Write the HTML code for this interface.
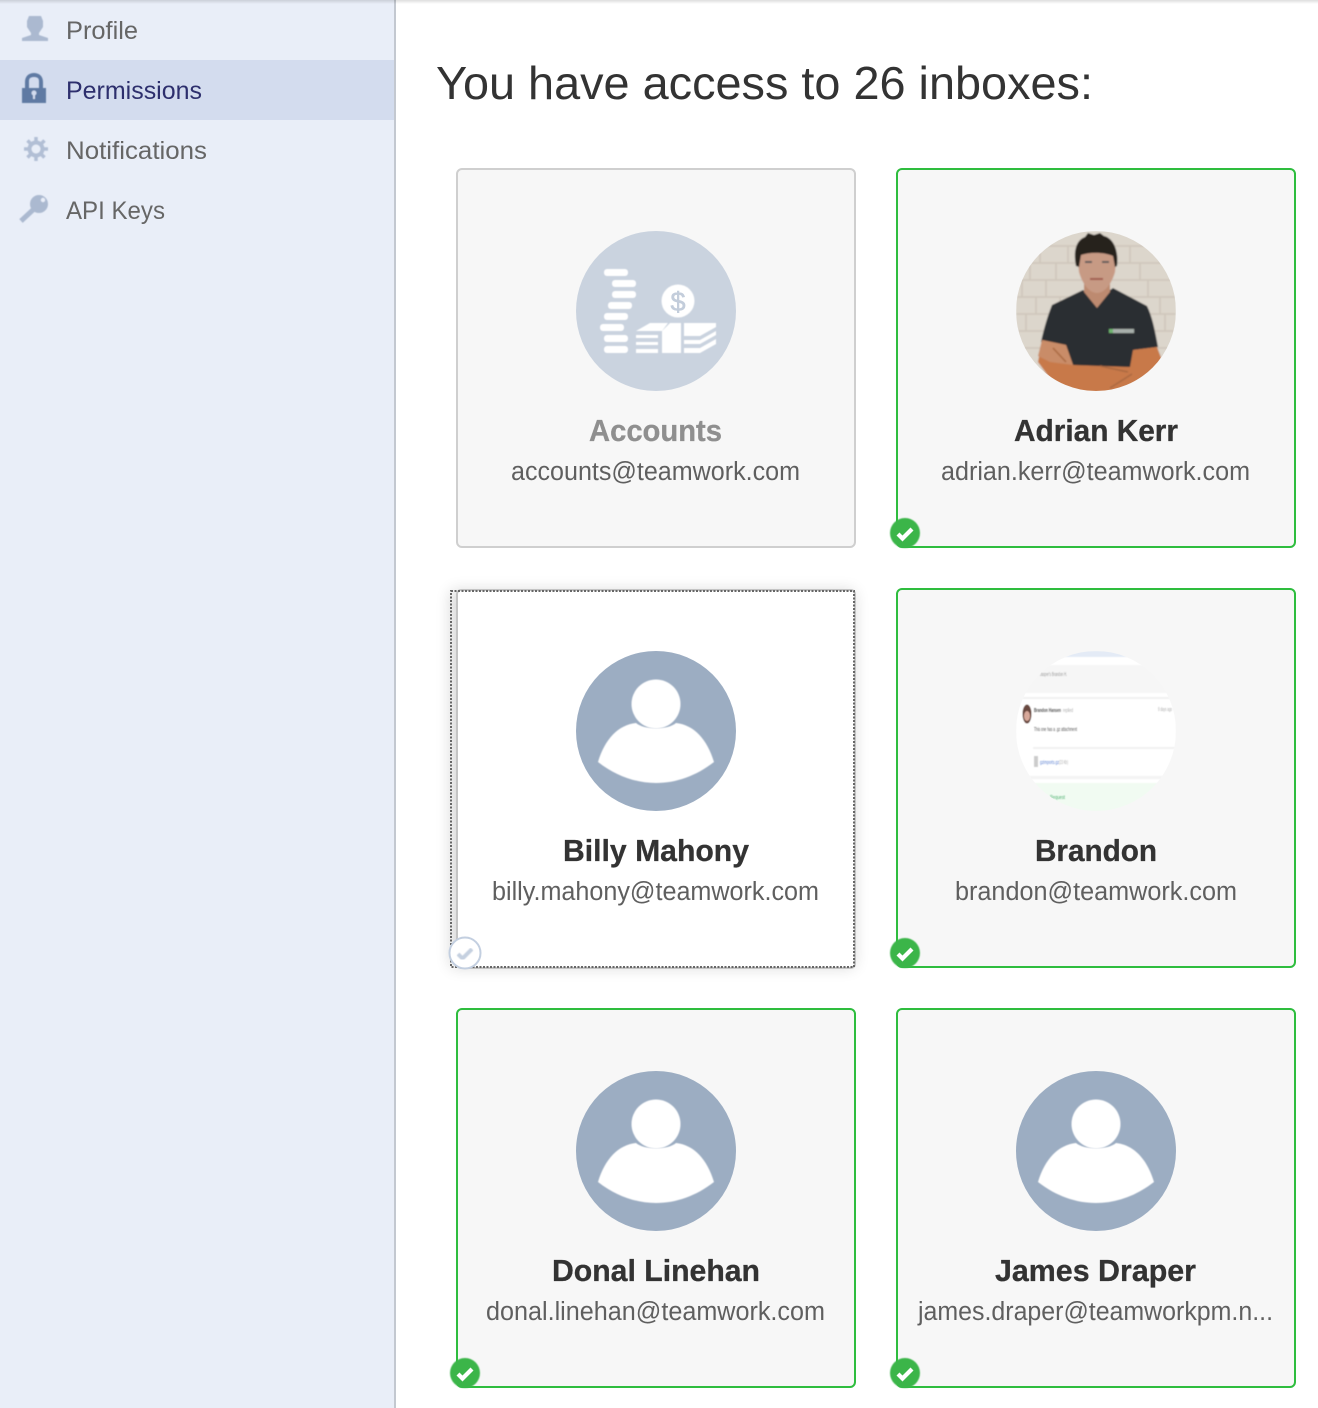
<!DOCTYPE html>
<html lang="en"><head><meta charset="utf-8"><title>Permissions</title>
<style>
html,body{margin:0;padding:0;background:#fff;width:1318px;height:1408px;overflow:hidden}
svg{display:block}
text{font-family:"Liberation Sans",sans-serif}
.nav{font-size:25px;fill:#666}
.nm{font-size:31px;font-weight:700;fill:#333;stroke:#333;stroke-width:.3}
.em{font-size:25.5px;fill:#5f5f5f}
</style></head><body>
<svg xmlns="http://www.w3.org/2000/svg" width="1318" height="1408" viewBox="0 0 1318 1408">
<defs>
<linearGradient id="top" x1="0" y1="0" x2="0" y2="1"><stop offset="0" stop-color="#000" stop-opacity=".13"/><stop offset="1" stop-color="#000" stop-opacity="0"/></linearGradient>
<filter id="b1" x="-10%" y="-10%" width="120%" height="120%"><feGaussianBlur stdDeviation=".9"/></filter>
<filter id="b3" x="-10%" y="-10%" width="120%" height="120%"><feGaussianBlur stdDeviation=".4"/></filter>
<filter id="sh" x="-15%" y="-15%" width="130%" height="130%"><feGaussianBlur stdDeviation="8"/></filter>
<clipPath id="c1"><circle cx="1096" cy="311" r="80"/></clipPath>
<clipPath id="c2"><circle cx="1096" cy="731" r="80"/></clipPath>
<g id="person">
<circle r="80" fill="#9cadc2"/>
<path d="M-58,31C-51,8-38-6-20-8C-12-1 12-1 20-8C38-6 51,8 58,31C40,45 20,52 0,52C-20,52-40,45-58,31Z" fill="#fff" filter="url(#b3)"/>
<circle cx="0" cy="-27" r="24.5" fill="#fff" filter="url(#b3)"/>
</g>
<g id="ok"><circle r="15" fill="#3bb54a" filter="url(#b3)"/><path d="M-7,1L-2.5,5.5L7,-4" fill="none" stroke="#fff" stroke-width="4.2"/></g>
</defs>

<!-- sidebar -->
<rect x="0" y="0" width="394" height="1408" fill="#e9eef8"/>
<rect x="394" y="0" width="2" height="1408" fill="#c3c8d0"/>
<rect x="0" y="60" width="394" height="60" fill="#d3dcee"/>
<rect x="0" y="0" width="1318" height="4" fill="url(#top)"/>

<g filter="url(#b3)">
<path d="M29,16H41L43,21V27L39,33V35L48,38V41H22V38L31,35V33L27,27V21Z" fill="#abb9d0"/>
<path d="M22,88H25V82C25,76 29,73 34,73C39,73 43,76 43,82V88H46V103H22ZM29,88H39V81C39,78 37,77 34,77C31,77 29,78 29,81Z" fill="#5f7aa3" fill-rule="evenodd"/>
<circle cx="34" cy="93" r="2.500" fill="#d3dcee"/><rect x="33" y="93" width="2" height="6" fill="#d3dcee"/>
<path d="M36,137V161M24,149H48M27.5,140.5L44.500,157.500M44.500,140.500L27.500,157.500" stroke="#b2bfd5" stroke-width="3.500"/>
<circle cx="36" cy="149" r="8.500" fill="#b2bfd5"/>
<circle cx="36" cy="149" r="4.500" fill="#e9eef8"/>
<circle cx="39" cy="204" r="9" fill="#abb9d0"/>
<path d="M35,208L21,221" stroke="#abb9d0" stroke-width="5"/>
<circle cx="43" cy="200" r="2.200" fill="#e9eef8"/>
</g>

<text class="nav" x="66" y="39" textLength="72" lengthAdjust="spacingAndGlyphs">Profile</text>
<text class="nav" x="66" y="99" textLength="136" lengthAdjust="spacingAndGlyphs" style="fill:#2d2f6d">Permissions</text>
<text class="nav" x="66" y="159" textLength="141" lengthAdjust="spacingAndGlyphs">Notifications</text>
<text class="nav" x="66" y="219" textLength="99" lengthAdjust="spacingAndGlyphs">API Keys</text>

<text x="436" y="99" font-size="46" fill="#333" textLength="657" lengthAdjust="spacingAndGlyphs">You have access to 26 inboxes:</text>

<!-- card 1 -->
<rect x="457" y="169" width="398" height="378" rx="5" fill="#f7f7f7" stroke="#cfcfcf" stroke-width="2"/>
<circle cx="656" cy="311" r="80" fill="#cad3df"/>
<g fill="#fff" filter="url(#b3)">
<rect x="604" y="269" width="24" height="7" rx="3"/><rect x="612" y="280" width="24" height="7" rx="3"/>
<rect x="612" y="291" width="24" height="7" rx="3"/><rect x="608" y="302" width="24" height="7" rx="3"/>
<rect x="604" y="313" width="24" height="7" rx="3"/><rect x="600" y="324" width="24" height="7" rx="3"/>
<rect x="604" y="335" width="24" height="7" rx="3"/><rect x="604" y="346" width="24" height="7" rx="3"/>
<circle cx="678" cy="301" r="16.500"/>
<path d="M636,331L650,323H668L662,331ZM636,335H658V338H636ZM636,342H658V345H636ZM636,349H658V353H636Z"/>
<path d="M662,331L670,323H681V353H662Z"/>
<path d="M684,323H716V327L700,336H684ZM684,340H700L716,331V335L700,344H684ZM684,348H700L716,339V344L700,353H684Z"/>
</g>
<text x="678" y="311" font-size="27" fill="#c3cddb" stroke="#c3cddb" stroke-width=".6" text-anchor="middle">$</text>
<text class="nm" x="589" y="441" textLength="133" lengthAdjust="spacingAndGlyphs" style="fill:#8f8f8f;stroke:#8f8f8f">Accounts</text>
<text class="em" x="511" y="480" textLength="289" lengthAdjust="spacingAndGlyphs">accounts@teamwork.com</text>

<!-- card 2 -->
<rect x="897" y="169" width="398" height="378" rx="5" fill="#f7f7f7" stroke="#2ebd3e" stroke-width="2"/>
<g clip-path="url(#c1)"><g filter="url(#b1)">
<rect x="1016" y="231" width="160" height="160" fill="#dcd6cc"/>
<g stroke="#cdc5b9" stroke-width="1.500" fill="none">
<path d="M1016,246H1176M1016,263H1176M1016,280H1176M1016,297H1176M1016,314H1176M1016,331H1176M1016,348H1176"/>
<path d="M1040,246V263M1068,246V263M1130,246V263M1160,246V263M1030,263V280M1056,263V280M1140,263V280M1022,280V297M1046,280V297M1148,280V297M1036,297V314M1060,297V314M1160,297V314M1026,314V331M1165,314V331"/>
</g>
<path d="M1083,290L1052,305C1048,315 1044,328 1041,342L1066,346L1073,366L1130,368L1134,350L1158,347C1155,330 1152,316 1147,306L1113,288L1096,300Z" fill="#2c2d33"/>
<path d="M1084,278H1110V292L1097,308L1084,292Z" fill="#bd8a70"/>
<path d="M1078,262C1078,250 1085,244 1097,244C1109,244 1116,250 1116,262L1115,272C1112,283 1105,293 1097,293C1089,293 1082,283 1079,272Z" fill="#c79a84"/>
<path d="M1076,266C1073,252 1076,240 1085,237L1088,233L1094,235L1100,233L1104,236C1113,238 1119,250 1117,266L1115,267L1113,256C1104,252 1090,252 1081,255L1079,267Z" fill="#27221f"/>
<path d="M1085,262H1092M1102,262H1109" stroke="#5d5a5a" stroke-width="2"/>
<path d="M1090,279H1103" stroke="#a0584c" stroke-width="2"/>
<path d="M1042,340L1066,345L1073,365L1130,367L1133,350L1157,347L1162,360L1140,392H1060L1038,362Z" fill="#c8794a"/>
<path d="M1042,340L1066,345L1073,365L1050,362L1038,356Z" fill="#c98c68"/>
<path d="M1053,348L1066,362M1100,366L1128,372M1110,388L1132,374" stroke="#a9683f" stroke-width="1.500" fill="none"/>
<rect x="1109" y="329" width="25" height="4" fill="#a8b0ac"/><rect x="1109" y="329" width="4" height="4" fill="#6fb36f"/>
</g></g>
<text class="nm" x="1014" y="441" textLength="164" lengthAdjust="spacingAndGlyphs">Adrian Kerr</text>
<text class="em" x="941" y="480" textLength="309" lengthAdjust="spacingAndGlyphs">adrian.kerr@teamwork.com</text>
<use href="#ok" x="905" y="533"/>

<!-- card 3 -->
<rect x="451" y="591" width="403" height="376" fill="#000" opacity=".16" filter="url(#sh)"/>
<rect x="457" y="590" width="398" height="378" rx="4" fill="#fff" stroke="#c4c4c4" stroke-width="2"/>
<rect x="451" y="591" width="403" height="376" fill="none" stroke="#666" stroke-width="2" stroke-dasharray="2 1.500"/>
<use href="#person" x="656" y="731"/>
<text class="nm" x="563" y="861" textLength="186" lengthAdjust="spacingAndGlyphs">Billy Mahony</text>
<text class="em" x="492" y="900" textLength="327" lengthAdjust="spacingAndGlyphs">billy.mahony@teamwork.com</text>
<circle cx="465" cy="953" r="15.500" fill="#fff" stroke="#c3cfe0" stroke-width="2"/>
<path d="M458,954L462.500,958.500L472,949" fill="none" stroke="#c5d0e0" stroke-width="4" filter="url(#b3)"/>

<!-- card 4 -->
<rect x="897" y="589" width="398" height="378" rx="5" fill="#f7f7f7" stroke="#2ebd3e" stroke-width="2"/>
<g clip-path="url(#c2)"><g filter="url(#b3)">
<rect x="1016" y="651" width="160" height="160" fill="#fff"/>
<rect x="1016" y="651" width="160" height="6" fill="#e4ebf6"/>
<rect x="1016" y="665" width="160" height="28" fill="#f6f6f6"/>
<rect x="1016" y="697" width="160" height="2" fill="#f2f2f2"/>
<rect x="1033" y="747" width="143" height="2" fill="#f2f2f2"/>
<rect x="1016" y="776" width="160" height="3" fill="#f4f4f4"/>
<rect x="1016" y="783" width="160" height="30" fill="#f1fbf2"/>
<ellipse cx="1027" cy="714" rx="4.500" ry="9.500" fill="#6b4a3f"/>
<ellipse cx="1027" cy="716" rx="3" ry="5" fill="#d8a89a"/>
<rect x="1034" y="756" width="4" height="11" fill="#ccc"/>
</g>
<g filter="url(#b3)">
<text x="1040" y="676" font-size="5" fill="#999" textLength="27" lengthAdjust="spacingAndGlyphs">Jasper's Brandon H.</text>
<text x="1034" y="712" font-size="5.500" font-weight="700" fill="#555" textLength="27" lengthAdjust="spacingAndGlyphs">Brandon Hansen</text>
<text x="1063" y="712" font-size="5" fill="#aaa" textLength="10" lengthAdjust="spacingAndGlyphs">replied</text>
<text x="1158" y="711" font-size="5" fill="#aaa" textLength="14" lengthAdjust="spacingAndGlyphs">9 days ago</text>
<text x="1034" y="731" font-size="5.500" fill="#555" textLength="43" lengthAdjust="spacingAndGlyphs">This one has a .gz attachment</text>
<text x="1040" y="764" font-size="5" fill="#5a7fd0" textLength="19" lengthAdjust="spacingAndGlyphs">gzimports.gz</text>
<text x="1059" y="764" font-size="5" fill="#aaa" textLength="9" lengthAdjust="spacingAndGlyphs">(23 Kb)</text>
<text x="1050" y="799" font-size="5" fill="#4caf6e" textLength="15" lengthAdjust="spacingAndGlyphs">Request</text>
</g></g>
<text class="nm" x="1035" y="861" textLength="122" lengthAdjust="spacingAndGlyphs">Brandon</text>
<text class="em" x="955" y="900" textLength="282" lengthAdjust="spacingAndGlyphs">brandon@teamwork.com</text>
<use href="#ok" x="905" y="953"/>

<!-- card 5 -->
<rect x="457" y="1009" width="398" height="378" rx="5" fill="#f7f7f7" stroke="#2ebd3e" stroke-width="2"/>
<use href="#person" x="656" y="1151"/>
<text class="nm" x="552" y="1281" textLength="208" lengthAdjust="spacingAndGlyphs">Donal Linehan</text>
<text class="em" x="486" y="1320" textLength="339" lengthAdjust="spacingAndGlyphs">donal.linehan@teamwork.com</text>
<use href="#ok" x="465" y="1373"/>

<!-- card 6 -->
<rect x="897" y="1009" width="398" height="378" rx="5" fill="#f7f7f7" stroke="#2ebd3e" stroke-width="2"/>
<use href="#person" x="1096" y="1151"/>
<text class="nm" x="995" y="1281" textLength="201" lengthAdjust="spacingAndGlyphs">James Draper</text>
<text class="em" x="918" y="1320" textLength="355" lengthAdjust="spacingAndGlyphs">james.draper@teamworkpm.n...</text>
<use href="#ok" x="905" y="1373"/>
</svg>
</body></html>
